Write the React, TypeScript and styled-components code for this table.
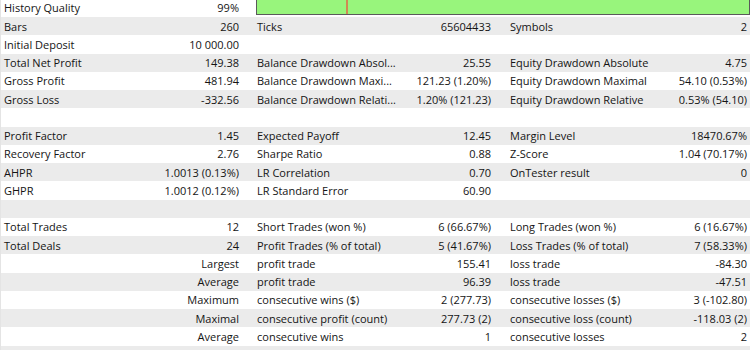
import styled, { createGlobalStyle } from "styled-components";

const GlobalStyle = createGlobalStyle`
  html, body {
    margin: 0;
    padding: 0;
    background: #ffffff;
    overflow: hidden;
  }
`;

type Cells = string[];

const rows: Cells[] = [
  ["Bars", "260", "Ticks", "65604433", "Symbols", "2"],
  ["Initial Deposit", "10 000.00", "", "", "", ""],
  ["Total Net Profit", "149.38", "Balance Drawdown Absol...", "25.55", "Equity Drawdown Absolute", "4.75"],
  ["Gross Profit", "481.94", "Balance Drawdown Maxi...", "121.23 (1.20%)", "Equity Drawdown Maximal", "54.10 (0.53%)"],
  ["Gross Loss", "-332.56", "Balance Drawdown Relati...", "1.20% (121.23)", "Equity Drawdown Relative", "0.53% (54.10)"],
  [],
  ["Profit Factor", "1.45", "Expected Payoff", "12.45", "Margin Level", "18470.67%"],
  ["Recovery Factor", "2.76", "Sharpe Ratio", "0.88", "Z-Score", "1.04 (70.17%)"],
  ["AHPR", "1.0013 (0.13%)", "LR Correlation", "0.70", "OnTester result", "0"],
  ["GHPR", "1.0012 (0.12%)", "LR Standard Error", "60.90", "", ""],
  [],
  ["Total Trades", "12", "Short Trades (won %)", "6 (66.67%)", "Long Trades (won %)", "6 (16.67%)"],
  ["Total Deals", "24", "Profit Trades (% of total)", "5 (41.67%)", "Loss Trades (% of total)", "7 (58.33%)"],
  ["", "Largest", "profit trade", "155.41", "loss trade", "-84.30"],
  ["", "Average", "profit trade", "96.39", "loss trade", "-47.51"],
  ["", "Maximum", "consecutive wins ($)", "2 (277.73)", "consecutive losses ($)", "3 (-102.80)"],
  ["", "Maximal", "consecutive profit (count)", "277.73 (2)", "consecutive loss (count)", "-118.03 (2)"],
  ["", "Average", "consecutive wins", "1", "consecutive losses", "2"],
  [],
];

// column widths and right padding of value for each group
const groups = [
  { w: 253, pr: 15 },
  { w: 253, pr: 16 },
  { w: 243, pr: 3 },
];

const App = () => {
  return (
    <>
      <GlobalStyle />
      <Sheet>
        <Row shade={false}>
          <Group w={groups[0].w} pr={groups[0].pr}>
            <Label>History Quality</Label>
            <Value>99%</Value>
          </Group>
          <BarCell>
            <QualityBar>
              <Marker />
            </QualityBar>
          </BarCell>
        </Row>
        {rows.map((r, i) => (
          <Row key={i} shade={i % 2 === 0}>
            {groups.map((g, k) => (
              <Group key={k} w={g.w} pr={g.pr}>
                <Label>{r[k * 2] || ""}</Label>
                <Value>{r[k * 2 + 1] || ""}</Value>
              </Group>
            ))}
          </Row>
        ))}
      </Sheet>
    </>
  );
};

export default App;

const Sheet = styled.div`
  width: 750px;
  margin-top: -1.25px;
  border-left: 1px solid #e4e4e4;
  box-sizing: border-box;
  font-family: "Open Sans", "Noto Sans", sans-serif;
  font-size: 11px;
  color: #141414;
`;

const Row = styled.div<{ shade: boolean }>`
  display: flex;
  height: 18.25px;
  align-items: center;
  background-color: ${({ shade }) => (shade ? "#ebebeb" : "#ffffff")};
`;

const Group = styled.div<{ w: number; pr: number }>`
  display: flex;
  justify-content: space-between;
  align-items: center;
  box-sizing: border-box;
  width: ${({ w }) => w}px;
  padding: 0 ${({ pr }) => pr}px 0 3px;
  white-space: nowrap;
`;

const Label = styled.span``;

const Value = styled.span`
  text-align: right;
`;

const BarCell = styled.div`
  flex: 1;
  height: 100%;
  padding-left: 2px;
  padding-right: 0;
  box-sizing: border-box;
`;

const QualityBar = styled.div`
  position: relative;
  height: 16px;
  box-sizing: border-box;
  border: 1px solid #5a5a5a;
  background-color: #98f57c;
`;

const Marker = styled.span`
  position: absolute;
  left: 89px;
  top: 0;
  bottom: 0;
  width: 2px;
  background-color: #d08a52;
`;
